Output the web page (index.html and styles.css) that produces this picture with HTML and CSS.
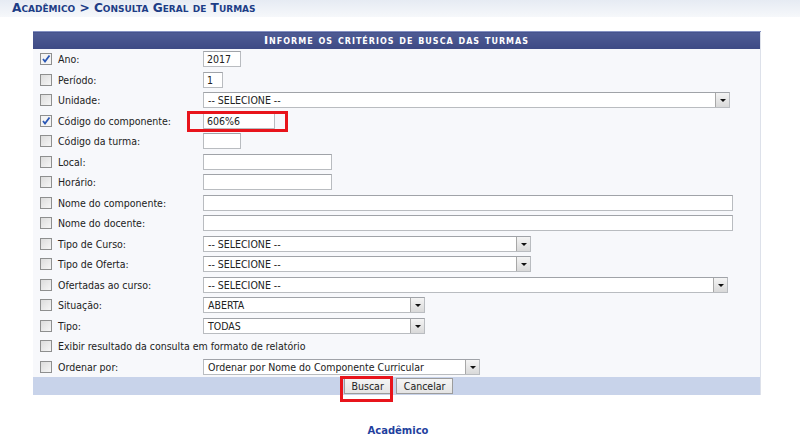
FILE: index.html
```html
<!DOCTYPE html>
<html lang="pt">
<head>
<meta charset="utf-8">
<title>Consulta Geral de Turmas</title>
<link rel="stylesheet" href="styles.css">
</head>
<body>
<div class="crumb"><span class="crumb-text">Acadêmico &gt; Consulta Geral de Turmas</span></div>

<div class="wrap">
<table class="form">
  <thead>
    <tr><th colspan="3" class="caption">Informe os critérios de busca das turmas</th></tr>
  </thead>
  <tbody>
    <tr><td class="c"><span class="cb on"></span></td><td class="l">Ano:</td><td class="f"><span class="inp w38">2017</span></td></tr>
    <tr><td class="c"><span class="cb"></span></td><td class="l">Período:</td><td class="f"><span class="inp w20">1</span></td></tr>
    <tr><td class="c"><span class="cb"></span></td><td class="l">Unidade:</td><td class="f"><span class="sel w527"><span class="st">-- SELECIONE --</span><span class="arr"></span></span></td></tr>
    <tr><td class="c"><span class="cb on"></span></td><td class="l">Código do componente:</td><td class="f"><span class="hl-wrap"><span class="inp w72">606%6</span><span class="hl hl-code"></span></span></td></tr>
    <tr><td class="c"><span class="cb"></span></td><td class="l">Código da turma:</td><td class="f"><span class="inp w38"></span></td></tr>
    <tr><td class="c"><span class="cb"></span></td><td class="l">Local:</td><td class="f"><span class="inp w129"></span></td></tr>
    <tr><td class="c"><span class="cb"></span></td><td class="l">Horário:</td><td class="f"><span class="inp w129"></span></td></tr>
    <tr><td class="c"><span class="cb"></span></td><td class="l">Nome do componente:</td><td class="f"><span class="inp w530"></span></td></tr>
    <tr><td class="c"><span class="cb"></span></td><td class="l">Nome do docente:</td><td class="f"><span class="inp w530"></span></td></tr>
    <tr><td class="c"><span class="cb"></span></td><td class="l">Tipo de Curso:</td><td class="f"><span class="sel w328"><span class="st">-- SELECIONE --</span><span class="arr"></span></span></td></tr>
    <tr><td class="c"><span class="cb"></span></td><td class="l">Tipo de Oferta:</td><td class="f"><span class="sel w328"><span class="st">-- SELECIONE --</span><span class="arr"></span></span></td></tr>
    <tr><td class="c"><span class="cb"></span></td><td class="l">Ofertadas ao curso:</td><td class="f"><span class="sel w525"><span class="st">-- SELECIONE --</span><span class="arr"></span></span></td></tr>
    <tr><td class="c"><span class="cb"></span></td><td class="l">Situação:</td><td class="f"><span class="sel w222"><span class="st">ABERTA</span><span class="arr"></span></span></td></tr>
    <tr><td class="c"><span class="cb"></span></td><td class="l">Tipo:</td><td class="f"><span class="sel w222"><span class="st">TODAS</span><span class="arr"></span></span></td></tr>
    <tr><td class="c"><span class="cb"></span></td><td class="l" colspan="2">Exibir resultado da consulta em formato de relatório</td></tr>
    <tr><td class="c"><span class="cb"></span></td><td class="l">Ordenar por:</td><td class="f"><span class="sel w277"><span class="st">Ordenar por Nome do Componente Curricular</span><span class="arr"></span></span></td></tr>
  </tbody>
  <tfoot>
    <tr><td colspan="3" class="foot">
      <span class="btns">
        <span class="hl-wrap"><span class="btn">Buscar</span><span class="hl hl-btn"></span></span>
        <span class="btn">Cancelar</span>
      </span>
    </td></tr>
  </tfoot>
</table>
</div>

<div class="bottom">Acadêmico</div>
</body>
</html>
```

FILE: styles.css
```css
html, body {
  margin: 0;
  padding: 0;
  background: #ffffff;
  font-family: "DejaVu Sans Condensed", "DejaVu Sans", Verdana, sans-serif;
  font-size: 10.5px;
  color: #222;
}

.crumb {
  height: 17px;
  background: linear-gradient(#e6ebf3, #f6f8fb);
  padding-left: 12px;
  margin-bottom: 14px;
}
.crumb-text {
  font-family: "DejaVu Sans", Verdana, sans-serif;
  font-variant: small-caps;
  font-weight: bold;
  font-size: 12.2px;
  line-height: 17px;
  color: #1d3d86;
  display: inline-block;
}

.wrap {
  padding-left: 33px;
}

.form {
  width: 728px;
  border-collapse: collapse;
  background: #f7f8fb;
  border-right: 1px solid #dde1ea;
}

.caption {
  height: 17px;
  padding: 0;
  background: linear-gradient(#4f5c95, #3d4a84);
  border-top: 1px solid #8591c2;
  color: #ffffff;
  font-family: "DejaVu Sans", Verdana, sans-serif;
  font-variant: small-caps;
  font-weight: bold;
  font-size: 11px;
  letter-spacing: 1px;
  text-align: center;
  line-height: 16px;
}

.form tbody tr {
  height: 20.5px;
}
.form td {
  padding: 0;
  vertical-align: middle;
}
.c {
  width: 15px;
  padding-left: 7px !important;
}
.l {
  width: 142px;
  padding-left: 3px !important;
  color: #222;
  white-space: nowrap;
}
.f {
  padding-left: 3px !important;
}

.cb {
  display: block;
  width: 10px;
  height: 10px;
  border: 1px solid #8e8f8f;
  background: linear-gradient(135deg, #dcdcdc, #f6f6f6);
  box-sizing: content-box;
}
.cb.on {
  background: #f4f4f4 url("data:image/svg+xml;utf8,<svg xmlns='http://www.w3.org/2000/svg' width='10' height='10'><path d='M2 5 L4 7.5 L8.5 1.5' fill='none' stroke='%232a57b5' stroke-width='1.8'/></svg>") no-repeat center;
}

.inp, .sel {
  display: inline-block;
  vertical-align: middle;
  height: 16px;
  box-sizing: border-box;
  background: #ffffff;
  border: 1px solid #b9bcc0;
  border-top-color: #a0a3a8;
  line-height: 14px;
  padding-left: 3px;
  color: #222;
  position: relative;
  white-space: nowrap;
}
.w20 { width: 20px; }
.w38 { width: 38px; }
.w72 { width: 72px; }
.w129 { width: 129px; }
.w222 { width: 222px; }
.w277 { width: 277px; }
.w328 { width: 328px; }
.w525 { width: 525px; }
.w527 { width: 527px; }
.w530 { width: 530px; }

.sel .st {
  padding-left: 1px;
}
.arr {
  position: absolute;
  right: 0;
  top: 0;
  width: 14px;
  height: 14px;
  box-sizing: border-box;
  border-left: 1px solid #a8a8a8;
  background: linear-gradient(#f4f4f4, #d9d9d9);
}
.arr::after {
  content: "";
  position: absolute;
  left: 4px;
  top: 6px;
  border-left: 3px solid transparent;
  border-right: 3px solid transparent;
  border-top: 3px solid #111;
}

.foot {
  height: 18px;
  background: #c8d3ea;
  text-align: center;
  padding: 0 !important;
}
.btns {
  display: inline-flex;
  gap: 4px;
  align-items: center;
  margin-left: 4px;
}
.btn {
  display: inline-block;
  height: 16px;
  box-sizing: border-box;
  line-height: 14px;
  padding: 0 7px;
  background: linear-gradient(#f5f5f5, #e4e4e4);
  border: 1px solid #9c9c9c;
  color: #222;
}

.hl-wrap {
  position: relative;
  display: inline-block;
  vertical-align: middle;
}
.hl {
  position: absolute;
  border: 3px solid #e8141b;
  pointer-events: none;
}
.hl-code {
  left: -16px;
  top: -2px;
  width: 95px;
  height: 15px;
}
.hl-btn {
  left: -4px;
  top: -2px;
  width: 47px;
  height: 20px;
}

.bottom {
  margin-top: 30px;
  text-align: center;
  font-family: "DejaVu Sans", Verdana, sans-serif;
  font-weight: bold;
  font-size: 10px;
  color: #1f3f9e;
  padding-right: 4px;
}
```
